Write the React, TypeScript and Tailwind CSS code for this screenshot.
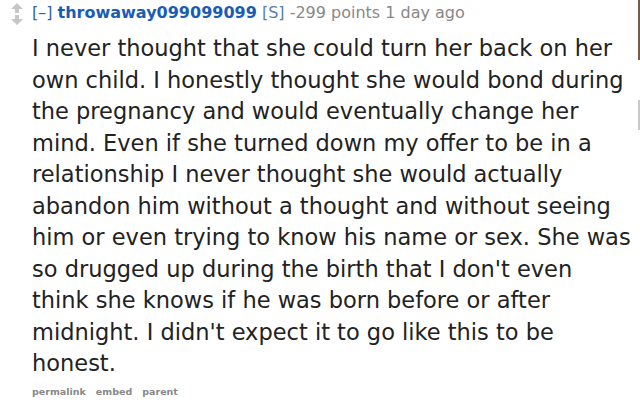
import React from 'react';

const body =
    "I never thought that she could turn her back on her own child. I honestly thought she would bond during the pregnancy and would eventually change her mind. Even if she turned down my offer to be in a relationship I never thought she would actually abandon him without a thought and without seeing him or even trying to know his name or sex. She was so drugged up during the birth that I don't even think she knows if he was born before or after midnight. I didn't expect it to go like this to be honest.";

const VoteArrows: React.FC = () => (
    <svg width="14" height="22" viewBox="0 0 14 22" className="mt-[2px]">
        <path d="M7 0 L13 6 L9 6 L9 10 L5 10 L5 6 L1 6 Z" fill="#c6c6c6" />
        <path d="M7 22 L13 16 L9 16 L9 12 L5 12 L5 16 L1 16 Z" fill="#c6c6c6" />
    </svg>
);

const App: React.FC = () => {
    return (
        <div className="w-[640px] h-[402px] bg-white overflow-hidden flex font-['DejaVu_Sans',sans-serif]">
            <div className="w-[32px] shrink-0 flex justify-center pt-[1px] pl-[1px]">
                <VoteArrows />
            </div>
            <div className="flex-1 pr-[6px]">
                <div className="text-[16px] leading-[22px] pt-[2px] text-[#888]">
                    <span className="text-[#369]">[–]</span>{' '}
                    <span className="font-bold text-[#1a5bb8]">throwaway099099099</span>{' '}
                    <span className="text-[#5a7fa8]">[S]</span>{' '}
                    <span>-299 points 1 day ago</span>
                </div>
                <p className="text-[22.5px] leading-[31.5px] text-[#222] mt-[9px]">{body}</p>
                <div className="flex gap-[10px] text-[9.5px] leading-[12px] font-bold text-[#888] mt-[6px]">
                    <span>permalink</span>
                    <span>embed</span>
                    <span>parent</span>
                </div>
            </div>
            <div className="w-[2px] shrink-0 flex flex-col">
                <div className="h-[60px] bg-[#7a5a48]" />
                <div className="h-[40px]" />
                <div className="h-[30px] bg-[#c9c9c9]" />
            </div>
        </div>
    );
};

export default App;
